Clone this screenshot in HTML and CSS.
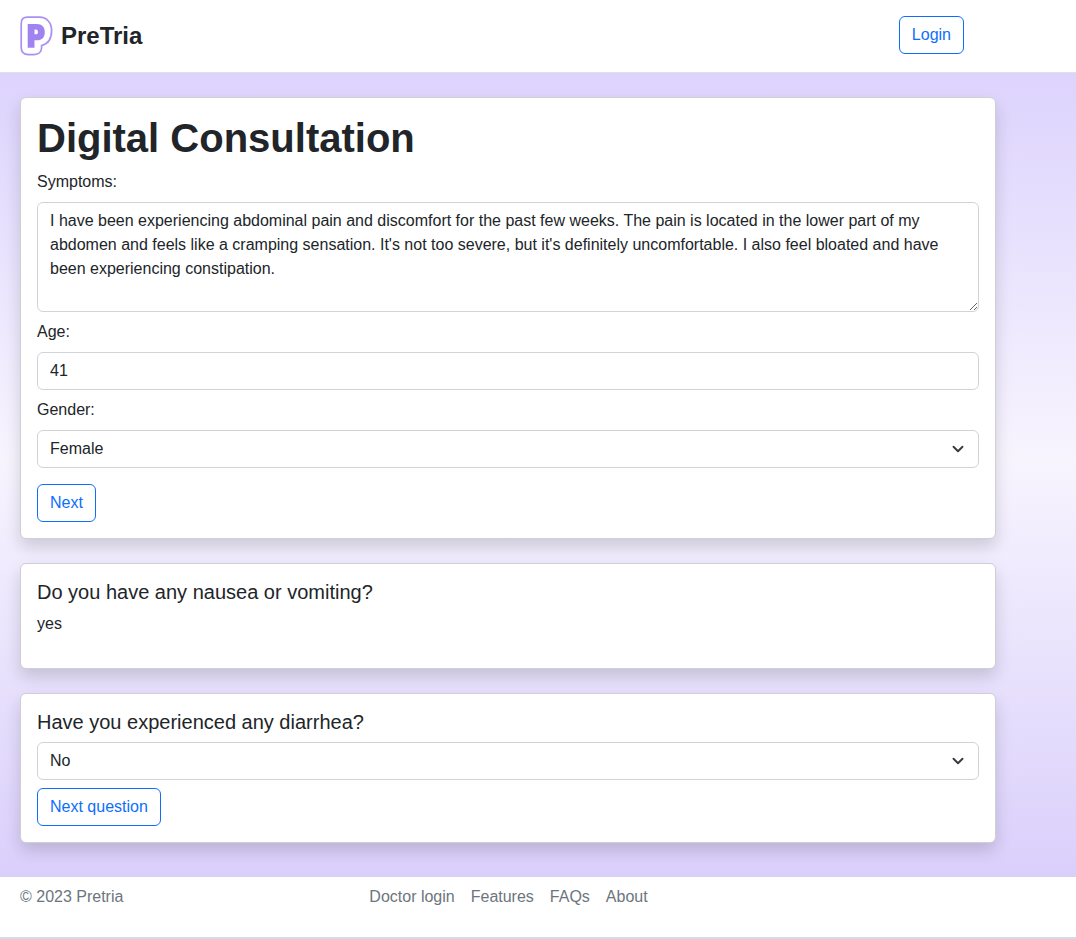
FILE: index.html
```html
<!DOCTYPE html>
<html lang="en">
<head>
  <meta charset="utf-8">
  <meta name="viewport" content="width=device-width, initial-scale=1">
  <title>PreTria - Digital Consultation</title>
  <link rel="stylesheet" href="styles.css">
</head>
<body>
  <header class="site-header">
    <a class="brand" href="#">
      <svg class="brand-logo" viewBox="0 0 33 40" aria-hidden="true">
        <path d="M7.500 1.200H19.500C26.800 1.200 31.600 6.800 31.600 14.500C31.600 22.500 27.800 28 21.600 29.500V31.500C21.600 36 18.500 38.600 14 38.600H8.500C4 38.600 1.200 36 1.200 31.500V7.500C1.200 3.500 3.500 1.200 7.500 1.200Z" fill="#fff" stroke="#aa90f4" stroke-width="1.700"/>
        <path d="M7.700 8H17C22 8 24.800 11 24.800 16C24.800 21.300 22 24.300 17 24.300H14.500V31.700H7.700ZM14.500 13.500V18.300H15.800C17.200 18.300 18 17.400 18 15.900C18 14.400 17.200 13.500 15.800 13.500Z" fill="#a083f0" fill-rule="evenodd"/>
      </svg>
      <span class="brand-name">PreTria</span>
    </a>
    <button class="btn" type="button">Login</button>
  </header>

  <main class="page">
    <form class="card">
      <h1 class="title">Digital Consultation</h1>
      <label class="label" for="symptoms">Symptoms:</label>
      <textarea class="control area" id="symptoms" rows="4">I have been experiencing abdominal pain and discomfort for the past few weeks. The pain is located in the lower part of my abdomen and feels like a cramping sensation. It's not too severe, but it's definitely uncomfortable. I also feel bloated and have been experiencing constipation.</textarea>
      <label class="label" for="age">Age:</label>
      <input class="control" id="age" type="text" inputmode="numeric" value="41">
      <label class="label" for="gender">Gender:</label>
      <div class="select-wrap">
        <select class="control" id="gender">
          <option selected>Female</option>
          <option>Male</option>
        </select>
        <svg class="chevron" viewBox="0 0 16 16" aria-hidden="true"><path d="m2 5 6 6 6-6"/></svg>
      </div>
      <button class="btn btn-spaced" type="button">Next</button>
    </form>

    <section class="card">
      <h2 class="question">Do you have any nausea or vomiting?</h2>
      <p class="answer">yes</p>
    </section>

    <form class="card">
      <label class="question" for="diarrhea">Have you experienced any diarrhea?</label>
      <div class="select-wrap">
        <select class="control" id="diarrhea">
          <option>Yes</option>
          <option selected>No</option>
        </select>
        <svg class="chevron" viewBox="0 0 16 16" aria-hidden="true"><path d="m2 5 6 6 6-6"/></svg>
      </div>
      <button class="btn" type="button">Next question</button>
    </form>
  </main>

  <footer class="site-footer">
    <p class="copyright">© 2023 Pretria</p>
    <nav class="footer-nav" aria-label="Footer">
      <a href="#">Doctor login</a>
      <a href="#">Features</a>
      <a href="#">FAQs</a>
      <a href="#">About</a>
    </nav>
  </footer>
</body>
</html>
```

FILE: styles.css
```css
*,
*::before,
*::after {
  box-sizing: border-box;
}

body {
  margin: 0;
  background: #fff;
  color: #212529;
  font-family: "Liberation Sans", Arial, sans-serif;
  font-size: 16px;
  line-height: 24px;
}

.site-header {
  display: flex;
  align-items: flex-start;
  justify-content: space-between;
  padding: 16px 112px 16px 20px;
  border-bottom: 1px solid #dee2e6;
}

.brand {
  display: flex;
  align-items: center;
  gap: 8px;
  color: inherit;
  text-decoration: none;
}

.brand-logo {
  width: 33px;
  height: 40px;
}

.brand-name {
  font-size: 24px;
  font-weight: 700;
}

.page {
  display: flex;
  flex-direction: column;
  gap: 24px;
  padding: 24px 80px 34px 20px;
  background: linear-gradient(#ddd3fd, #f7f4fe 48%, #dacffb);
}

.card {
  display: flex;
  flex-direction: column;
  align-items: flex-start;
  gap: 8px;
  padding: 16px;
  background: #fff;
  border: 1px solid #d0cfd3;
  border-radius: 6px;
  box-shadow: 0 8px 16px rgba(0, 0, 0, 0.15);
}

.title {
  margin: 0;
  font-size: 40px;
  font-weight: 700;
  line-height: 48px;
}

.control {
  display: block;
  width: 100%;
  height: 38px;
  margin: 0;
  padding: 6px 12px;
  appearance: none;
  background: #fff;
  border: 1px solid #ced4da;
  border-radius: 6px;
  color: inherit;
  font: inherit;
}

.area {
  height: 110px;
  resize: vertical;
}

.select-wrap {
  position: relative;
  width: 100%;
}

.chevron {
  position: absolute;
  top: 13px;
  right: 15px;
  width: 12px;
  height: 12px;
  fill: none;
  stroke: #343a40;
  stroke-width: 2.5;
  stroke-linecap: round;
  stroke-linejoin: round;
  pointer-events: none;
}

.btn {
  padding: 6px 12px;
  background: #fff;
  border: 1px solid #0d6efd;
  border-radius: 6px;
  color: #0d6efd;
  font: inherit;
  cursor: pointer;
}

.btn-spaced {
  margin-top: 8px;
}

.question {
  margin: 0;
  font-size: 20px;
  font-weight: 400;
}

.answer {
  margin: 0 0 16px;
}

.site-footer {
  display: grid;
  grid-template-columns: 1fr 2fr;
  padding: 8px 80px 28px 20px;
  border-bottom: 2px solid #cde0e7;
  color: #6c757d;
}

.copyright {
  margin: 0;
}

.footer-nav {
  display: flex;
  flex-wrap: wrap;
  gap: 0 16px;
  padding-left: 24px;
}

.footer-nav a {
  color: inherit;
  text-decoration: none;
}
```
